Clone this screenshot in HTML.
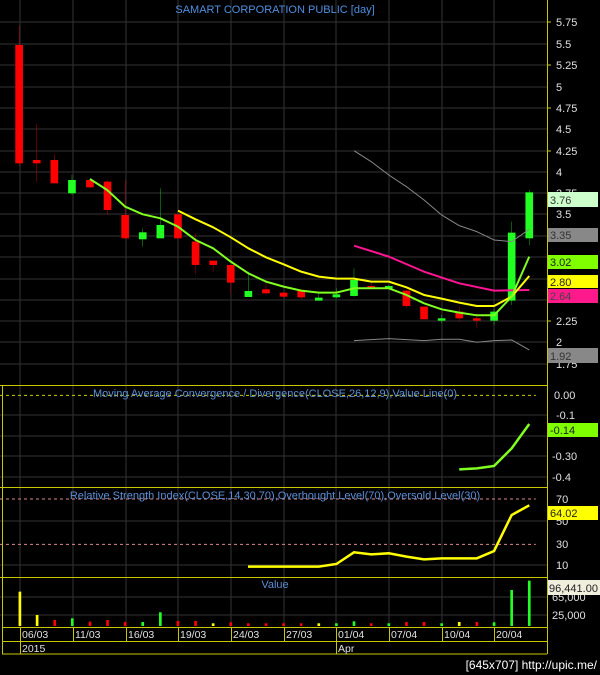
<!DOCTYPE html>
<html><head><style>
html,body{margin:0;padding:0;background:#000;width:600px;height:675px;overflow:hidden}
text{font-family:"Liberation Sans",sans-serif}
</style></head><body>
<svg width="600" height="675" xmlns="http://www.w3.org/2000/svg">
<rect width="600" height="675" fill="#000"/>
<!-- grid top -->
<g stroke="#333" stroke-width="1">
<line x1="0" x2="547" y1="22" y2="22"/><line x1="0" x2="547" y1="44" y2="44"/><line x1="0" x2="547" y1="65" y2="65"/><line x1="0" x2="547" y1="87" y2="87"/><line x1="0" x2="547" y1="108" y2="108"/><line x1="0" x2="547" y1="129" y2="129"/><line x1="0" x2="547" y1="151" y2="151"/><line x1="0" x2="547" y1="172" y2="172"/><line x1="0" x2="547" y1="193" y2="193"/><line x1="0" x2="547" y1="214" y2="214"/><line x1="0" x2="547" y1="236" y2="236"/><line x1="0" x2="547" y1="257" y2="257"/><line x1="0" x2="547" y1="279" y2="279"/><line x1="0" x2="547" y1="300" y2="300"/><line x1="0" x2="547" y1="321" y2="321"/><line x1="0" x2="547" y1="342" y2="342"/><line x1="0" x2="547" y1="364" y2="364"/>
<line x1="20" x2="20" y1="0" y2="627"/><line x1="73" x2="73" y1="0" y2="627"/><line x1="126" x2="126" y1="0" y2="627"/><line x1="178" x2="178" y1="0" y2="627"/><line x1="231" x2="231" y1="0" y2="627"/><line x1="284" x2="284" y1="0" y2="627"/><line x1="336" x2="336" y1="0" y2="627"/><line x1="389" x2="389" y1="0" y2="627"/><line x1="442" x2="442" y1="0" y2="627"/><line x1="494" x2="494" y1="0" y2="627"/>
<line x1="0" x2="547" y1="415" y2="415"/><line x1="0" x2="547" y1="436" y2="436"/><line x1="0" x2="547" y1="456" y2="456"/><line x1="0" x2="547" y1="477" y2="477"/>
<line x1="0" x2="547" y1="521" y2="521"/><line x1="0" x2="547" y1="565" y2="565"/>
<line x1="0" x2="547" y1="597" y2="597"/><line x1="0" x2="547" y1="615" y2="615"/>
</g>
<text x="275" y="13" fill="#4f8fe0" font-size="11" text-anchor="middle">SAMART CORPORATION PUBLIC [day]</text>
<g transform="scale(0.3827,0.3333)">
<g stroke-width="1" vector-effect="non-scaling-stroke">
<!-- wicks -->
<g stroke="#f00"><line x1="50" x2="50" y1="78" y2="497"/><line x1="96" x2="96" y1="372" y2="545"/><line x1="142" x2="142" y1="463" y2="550"/><line x1="235" x2="235" y1="540" y2="565"/><line x1="281" x2="281" y1="540" y2="645"/><line x1="327" x2="327" y1="540" y2="715"/><line x1="465" x2="465" y1="643" y2="715"/><line x1="511" x2="511" y1="700" y2="822"/><line x1="557" x2="557" y1="782" y2="815"/><line x1="603" x2="603" y1="795" y2="880"/><line x1="695" x2="695" y1="840" y2="885"/><line x1="741" x2="741" y1="878" y2="895"/><line x1="787" x2="787" y1="873" y2="897"/><line x1="970" x2="970" y1="848" y2="862"/><line x1="1062" x2="1062" y1="870" y2="925"/><line x1="1108" x2="1108" y1="920" y2="958"/><line x1="1200" x2="1200" y1="920" y2="965"/><line x1="1246" x2="1246" y1="940" y2="985"/></g>
<g stroke="#2f2"><line x1="188" x2="188" y1="525" y2="585"/><line x1="373" x2="373" y1="685" y2="740"/><line x1="419" x2="419" y1="565" y2="715"/><line x1="649" x2="649" y1="815" y2="891"/><line x1="833" x2="833" y1="878" y2="902"/><line x1="879" x2="879" y1="865" y2="895"/><line x1="925" x2="925" y1="805" y2="890"/><line x1="1016" x2="1016" y1="855" y2="866"/><line x1="1154" x2="1154" y1="945" y2="970"/><line x1="1291" x2="1291" y1="925" y2="975"/><line x1="1337" x2="1337" y1="665" y2="915"/><line x1="1383" x2="1383" y1="570" y2="735"/></g>
</g>
<g fill="#f00">
<rect x="40" y="135" width="20" height="355"/><rect x="86" y="480" width="20" height="10"/><rect x="132" y="480" width="20" height="70"/><rect x="225" y="540" width="20" height="22"/><rect x="271" y="545" width="20" height="85"/><rect x="317" y="645" width="20" height="70"/><rect x="455" y="643" width="20" height="72"/><rect x="501" y="725" width="20" height="70"/><rect x="547" y="782" width="20" height="13"/><rect x="593" y="795" width="20" height="53"/><rect x="685" y="868" width="20" height="12"/><rect x="731" y="878" width="20" height="12"/><rect x="777" y="873" width="20" height="19"/><rect x="960" y="858" width="20" height="6"/><rect x="1052" y="872" width="20" height="46"/><rect x="1098" y="920" width="20" height="38"/><rect x="1190" y="935" width="20" height="20"/><rect x="1236" y="955" width="20" height="7"/>
</g>
<g fill="#2f2">
<rect x="178" y="540" width="20" height="40"/><rect x="363" y="697" width="20" height="21"/><rect x="409" y="675" width="20" height="40"/><rect x="639" y="873" width="20" height="18"/><rect x="823" y="893" width="20" height="9"/><rect x="869" y="883" width="20" height="9"/><rect x="915" y="840" width="20" height="48"/><rect x="1006" y="858" width="20" height="8"/><rect x="1144" y="955" width="20" height="7"/><rect x="1281" y="935" width="20" height="27"/><rect x="1327" y="698" width="20" height="204"/><rect x="1373" y="577" width="20" height="138"/>
</g>
<g fill="none" stroke-linejoin="round">
<polyline vector-effect="non-scaling-stroke" stroke="#888" stroke-width="1" points="925,452 970,485 1016,525 1062,560 1108,600 1154,645 1200,677 1246,695 1291,720 1337,725 1383,688"/>
<polyline vector-effect="non-scaling-stroke" stroke="#888" stroke-width="1" points="925,1022 1016,1016 1108,1022 1154,1018 1200,1018 1246,1027 1291,1022 1337,1020 1383,1050"/>
<polyline vector-effect="non-scaling-stroke" stroke="#ff1493" stroke-width="2" points="925,737 1016,770 1108,815 1200,850 1291,872 1383,870"/>
<polyline vector-effect="non-scaling-stroke" stroke="#ffff00" stroke-width="2" points="465,632 511,658 557,682 603,712 649,745 695,772 741,793 787,815 833,830 879,836 925,836 970,845 1016,845 1062,862 1108,885 1154,896 1200,908 1246,918 1291,918 1337,890 1383,828"/>
<polyline vector-effect="non-scaling-stroke" stroke="#80ff20" stroke-width="2" points="235,537 280,570 327,620 373,643 419,655 465,680 511,720 557,745 603,785 649,820 695,845 741,860 787,872 833,878 879,878 925,865 970,865 1016,865 1062,885 1108,910 1154,928 1200,938 1246,946 1291,946 1337,890 1383,770"/>
</g>
</g>
<!-- bottom panels in zoom coords -->
<g transform="translate(0,380) scale(0.3827,0.3333)" fill="none">
<line vector-effect="non-scaling-stroke" x1="0" x2="1400" y1="46" y2="46" stroke="#cc0" stroke-dasharray="3,3"/>
<line vector-effect="non-scaling-stroke" x1="0" x2="1400" y1="357" y2="357" stroke="#d88" stroke-dasharray="3,3"/>
<line vector-effect="non-scaling-stroke" x1="0" x2="1400" y1="493" y2="493" stroke="#d88" stroke-dasharray="3,3"/>
<polyline vector-effect="non-scaling-stroke" stroke="#80ff20" stroke-width="2.5" points="1200,268 1246,265 1291,258 1337,205 1383,132"/>
<polyline vector-effect="non-scaling-stroke" stroke="#ffff00" stroke-width="2.5" points="648,560 833,560 879,552 925,517 970,523 1016,520 1062,530 1108,538 1154,535 1246,535 1291,513 1337,405 1383,376"/>
<g vector-effect="non-scaling-stroke" stroke-width="7">
<line x1="52" x2="52" y1="738" y2="635" stroke="#ff0"/><line x1="97" x2="97" y1="738" y2="705" stroke="#ff0"/><line x1="143" x2="143" y1="738" y2="720" stroke="#f00"/><line x1="189" x2="189" y1="738" y2="715" stroke="#2f2"/><line x1="235" x2="235" y1="738" y2="725" stroke="#f00"/><line x1="281" x2="281" y1="738" y2="720" stroke="#f00"/><line x1="327" x2="327" y1="738" y2="726" stroke="#f00"/><line x1="373" x2="373" y1="738" y2="726" stroke="#2f2"/><line x1="419" x2="419" y1="738" y2="697" stroke="#2f2"/><line x1="465" x2="465" y1="738" y2="723" stroke="#f00"/><line x1="511" x2="511" y1="738" y2="723" stroke="#f00"/><line x1="557" x2="557" y1="738" y2="730" stroke="#ff0"/><line x1="603" x2="603" y1="738" y2="727" stroke="#f00"/><line x1="649" x2="649" y1="738" y2="730" stroke="#f00"/><line x1="695" x2="695" y1="738" y2="730" stroke="#f00"/><line x1="741" x2="741" y1="738" y2="730" stroke="#f00"/><line x1="787" x2="787" y1="738" y2="730" stroke="#f00"/><line x1="833" x2="833" y1="738" y2="730" stroke="#ff0"/><line x1="879" x2="879" y1="738" y2="730" stroke="#2f2"/><line x1="925" x2="925" y1="738" y2="724" stroke="#2f2"/><line x1="970" x2="970" y1="738" y2="730" stroke="#f00"/><line x1="1016" x2="1016" y1="738" y2="730" stroke="#2f2"/><line x1="1062" x2="1062" y1="738" y2="726" stroke="#f00"/><line x1="1108" x2="1108" y1="738" y2="726" stroke="#f00"/><line x1="1154" x2="1154" y1="738" y2="730" stroke="#2f2"/><line x1="1200" x2="1200" y1="738" y2="726" stroke="#ff0"/><line x1="1246" x2="1246" y1="738" y2="726" stroke="#f00"/><line x1="1291" x2="1291" y1="738" y2="727" stroke="#2f2"/><line x1="1337" x2="1337" y1="738" y2="630" stroke="#2f2"/><line x1="1383" x2="1383" y1="738" y2="602" stroke="#2f2"/>
</g>
</g>
<!-- frame lines -->
<g stroke="#c8c800" stroke-width="1" fill="none">
<line x1="547.5" x2="547.5" y1="0" y2="654"/>
<line x1="2.5" x2="2.5" y1="385" y2="654"/>
<line x1="0" x2="547" y1="385.5" y2="385.5"/>
<line x1="0" x2="547" y1="487.5" y2="487.5"/>
<line x1="0" x2="547" y1="577.5" y2="577.5"/>
<line x1="2" x2="547" y1="627.5" y2="627.5"/>
<line x1="2" x2="547" y1="641.5" y2="641.5"/>
<line x1="2" x2="547" y1="654" y2="654"/>
<line x1="20.5" x2="20.5" y1="627" y2="654"/>
<line x1="73.5" x2="73.5" y1="627" y2="641"/><line x1="126.5" x2="126.5" y1="627" y2="641"/><line x1="178.5" x2="178.5" y1="627" y2="641"/><line x1="231.5" x2="231.5" y1="627" y2="641"/><line x1="284.5" x2="284.5" y1="627" y2="641"/><line x1="336.5" x2="336.5" y1="627" y2="654"/><line x1="389.5" x2="389.5" y1="627" y2="641"/><line x1="442.5" x2="442.5" y1="627" y2="641"/><line x1="494.5" x2="494.5" y1="627" y2="641"/>
</g>
<g stroke="#c8c800"><line x1="547" x2="551" y1="22" y2="22"/><line x1="547" x2="551" y1="65" y2="65"/><line x1="547" x2="551" y1="108" y2="108"/><line x1="547" x2="551" y1="151" y2="151"/><line x1="547" x2="551" y1="321" y2="321"/></g>
<!-- axis labels -->
<g fill="#e0e0e0" font-size="11">
<text x="556" y="26">5.75</text><text x="556" y="48">5.5</text><text x="556" y="69">5.25</text><text x="556" y="91">5</text><text x="556" y="112">4.75</text><text x="556" y="133">4.5</text><text x="556" y="155">4.25</text><text x="556" y="176">4</text><text x="556" y="197">3.75</text><text x="556" y="218">3.5</text><text x="556" y="325">2.25</text><text x="556" y="346">2</text><text x="556" y="368">1.75</text>
<text x="554" y="399">0.00</text><text x="556" y="419">-0.1</text><text x="552" y="460">-0.30</text><text x="552" y="481">-0.4</text>
<text x="556" y="503">70</text><text x="556" y="525">50</text><text x="556" y="548">30</text><text x="556" y="569">10</text>
<text x="552" y="601">65,000</text><text x="552" y="619">25,000</text>
</g>
<rect x="548" y="192" width="50" height="15" fill="#ccffcc"/><text x="550" y="204" font-size="11" fill="#333">3.76</text>
<rect x="548" y="228" width="50" height="14" fill="#888"/><text x="550" y="239" font-size="11" fill="#333">3.35</text>
<rect x="548" y="255" width="50" height="14" fill="#7fff00"/><text x="550" y="266" font-size="11" fill="#222">3.02</text>
<rect x="548" y="275" width="50" height="13" fill="#ffff00"/><text x="550" y="286" font-size="11" fill="#222">2.80</text>
<rect x="548" y="289" width="50" height="14" fill="#ff1a8c"/><text x="550" y="300" font-size="11" fill="#444">2.64</text>
<rect x="548" y="348" width="50" height="15" fill="#888"/><text x="550" y="360" font-size="11" fill="#333">1.92</text>
<rect x="548" y="423" width="50" height="14" fill="#7fff00"/><text x="550" y="434" font-size="11" fill="#222">-0.14</text>
<rect x="548" y="506" width="50" height="14" fill="#ffff00"/><text x="550" y="517" font-size="11" fill="#222">64.02</text>
<rect x="548" y="580" width="52" height="15" fill="#f0eedc"/><text x="549" y="592" font-size="11" fill="#222">96,441.00</text>
<g fill="#5a8fd8" font-size="11" text-anchor="middle">
<text x="275" y="397">Moving Average Convergence / Divergence(CLOSE,26,12,9),Value Line(0)</text>
<text x="275" y="499">Relative Strength Index(CLOSE,14,30,70),Overbought Level(70),Oversold Level(30)</text>
<text x="275" y="588">Value</text>
</g>
<g fill="#e0e0e0" font-size="10.5">
<text x="22" y="638">06/03</text><text x="75" y="638">11/03</text><text x="128" y="638">16/03</text><text x="180" y="638">19/03</text><text x="233" y="638">24/03</text><text x="286" y="638">27/03</text><text x="338" y="638">01/04</text><text x="391" y="638">07/04</text><text x="444" y="638">10/04</text><text x="496" y="638">20/04</text>
<text x="22" y="652">2015</text><text x="338" y="652">Apr</text>
</g>
<text x="597" y="669" fill="#fff" font-size="12" text-anchor="end" font-family="Liberation Mono,monospace">[645x707] http://upic.me/</text>
</svg>
</body></html>
